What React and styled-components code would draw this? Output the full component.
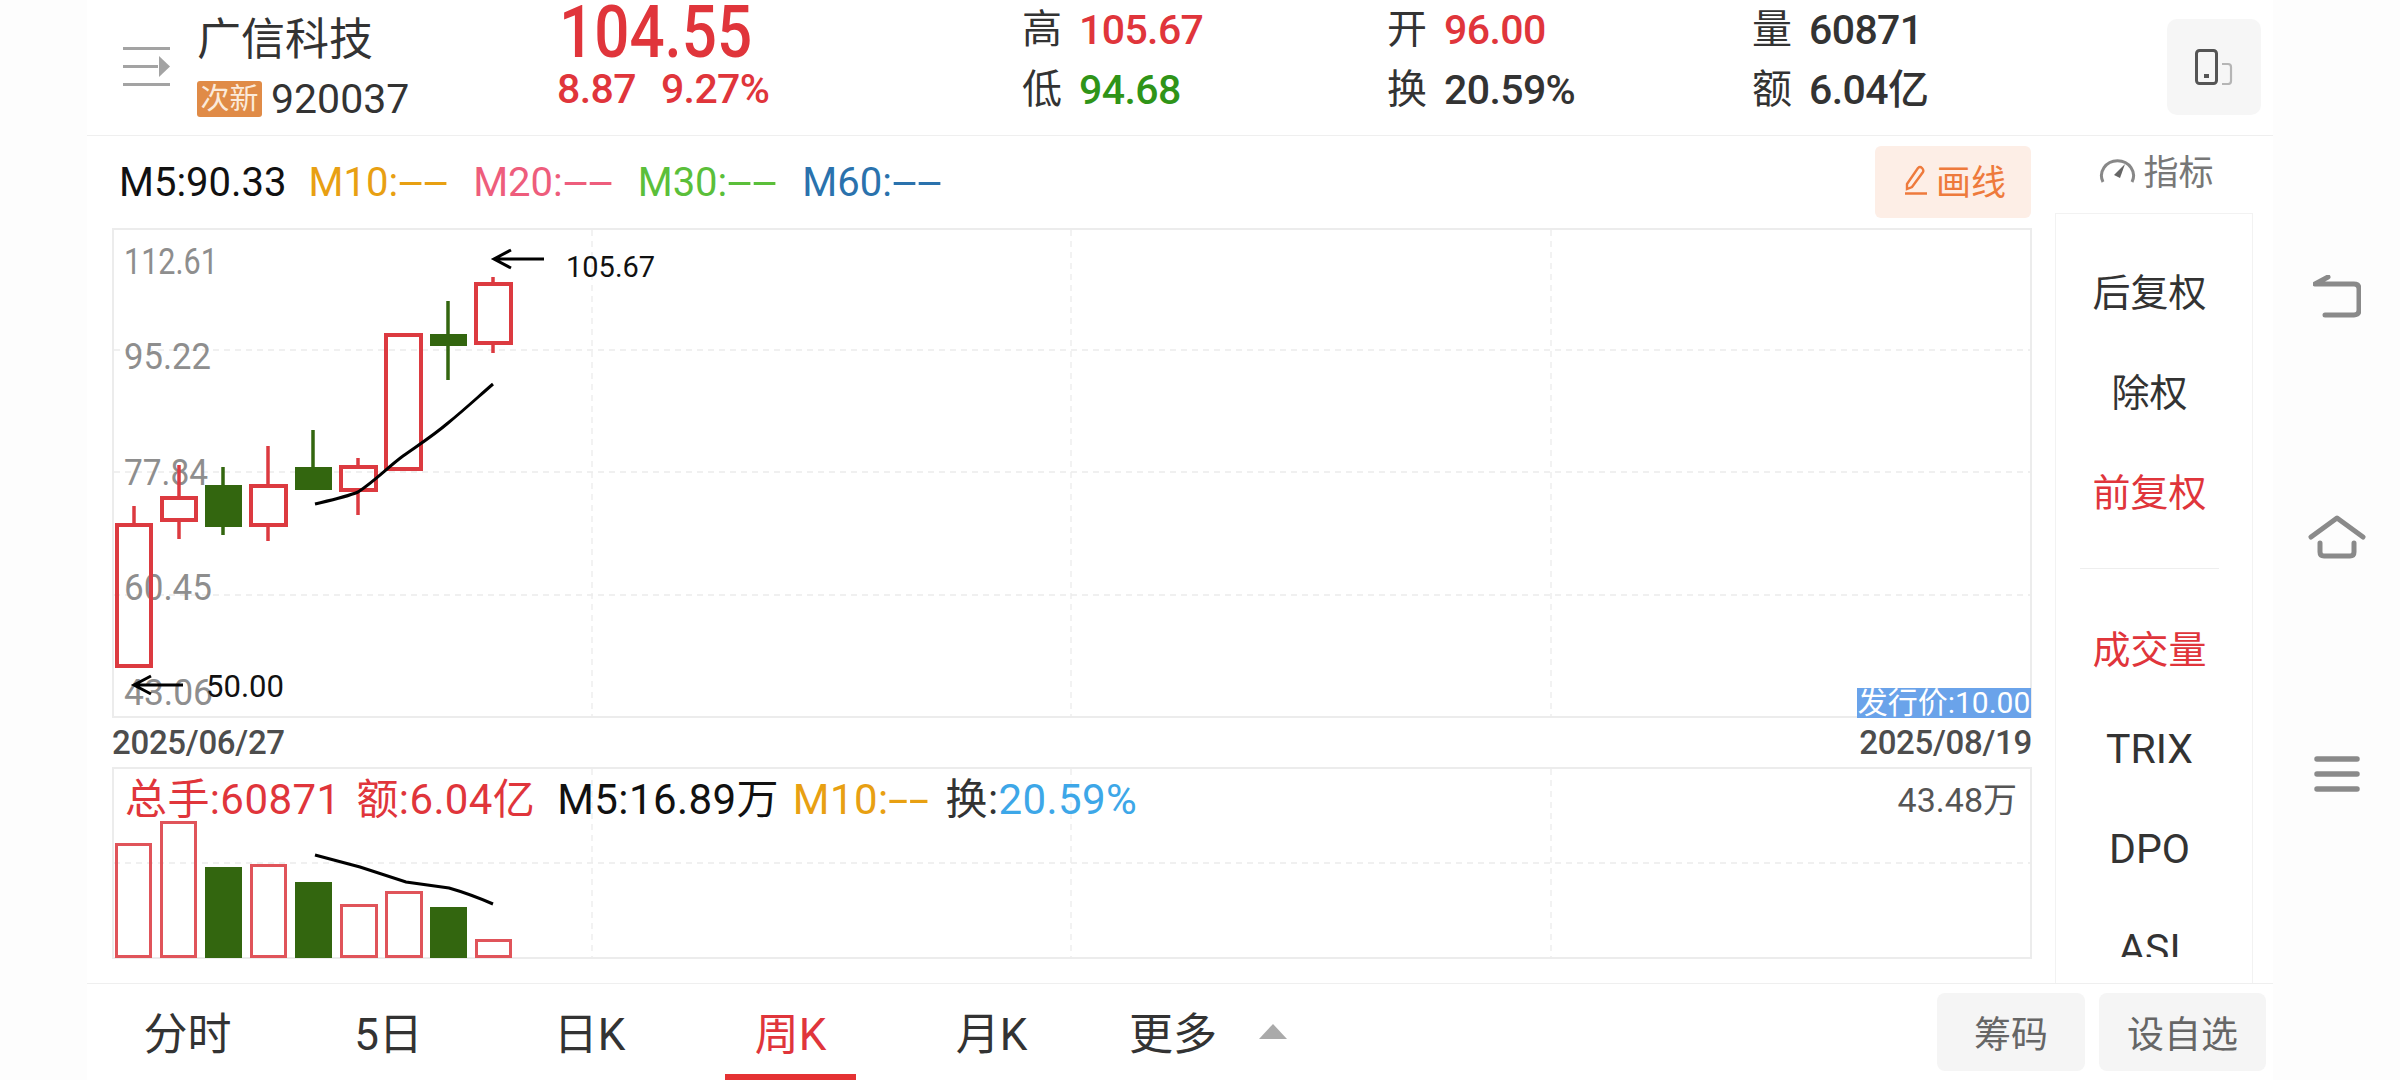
import styled, { createGlobalStyle } from 'styled-components'

const RED = '#e0353b'
const GREEN = '#33660f'

const GlobalStyle = createGlobalStyle`
    html, body {
        margin: 0;
        padding: 0;
        background: #fdfdfd;
    }
    * {
        box-sizing: border-box;
    }
`

const Page = styled.div`
    width: 2400px;
    height: 1080px;
    display: flex;
    overflow: hidden;
    padding-left: 87px;
    font-family: Roboto, "Noto Sans CJK SC", sans-serif;
    color: #333;
`

const Main = styled.div`
    width: 2186px;
    display: flex;
    flex-direction: column;
    background: #fff;
`

const Header = styled.header`
    height: 136px;
    flex: none;
    display: flex;
    padding-left: 36px;
    border-bottom: 1px solid #efefef;
`

const MenuIcon = styled.svg`
    width: 47px;
    height: 40px;
    margin-top: 47px;
    margin-right: 27px;
    flex: none;
`

const NameBlock = styled.div`
    width: 360px;
    flex: none;
`

const Name = styled.div`
    font-size: 44px;
    line-height: 44px;
    margin-top: 18px;
`

const CodeRow = styled.div`
    display: flex;
    align-items: center;
    margin-top: 19px;
`

const Badge = styled.span`
    width: 65px;
    height: 36px;
    background: #e08b47;
    color: #fbeadb;
    border-radius: 3px;
    font-size: 29px;
    line-height: 36px;
    text-align: center;
`

const Code = styled.span`
    font-size: 41px;
    line-height: 36px;
    margin-left: 9px;
`

const PriceBlock = styled.div`
    width: 468px;
    flex: none;
    color: ${RED};
`

const Price = styled.div`
    font-weight: 500;
    font-size: 72px;
    line-height: 66px;
    margin-left: 2px;
    transform: scaleX(0.86);
    transform-origin: left center;
`

const Change = styled.div`
    display: flex;
    gap: 25px;
    font-weight: 500;
    font-size: 41px;
    line-height: 44px;
    margin-top: 1px;
    letter-spacing: -0.6px;
`

const Stats = styled.div`
    width: 1095px;
    flex: none;
    display: grid;
    grid-template-columns: 365px 365px 1fr;
    grid-auto-rows: 60px;
    margin-left: -3px;
`

const Stat = styled.div`
    display: flex;
    align-items: center;
    gap: 17px;
    font-size: 40px;
    line-height: 60px;
`

const StatValue = styled.span`
    font-size: 41px;
    font-weight: 500;
    letter-spacing: -0.6px;
    color: ${p => p.$color || '#333'};
`

const LayoutButton = styled.button`
    width: 94px;
    height: 96px;
    margin: 19px 0 0 50px;
    border: 0;
    border-radius: 10px;
    background: #f6f6f6;
    display: flex;
    align-items: center;
    justify-content: center;
    padding: 0;
`

const Body = styled.div`
    height: 848px;
    flex: none;
    display: flex;
    padding-left: 25px;
    border-bottom: 1px solid #efefef;
`

const ChartColumn = styled.div`
    width: 1920px;
    flex: none;
`

const LegendBar = styled.div`
    height: 92px;
    display: flex;
    align-items: center;
    gap: 25px;
    padding: 0 1px 0 7px;
`

const Legend = styled.span`
    font-size: 40px;
    color: ${p => p.$color};
    margin-right: ${p => p.$pull || 0}px;
`

// the dashes in the picture are long, a hyphen stretched sideways comes closest
const Dashes = styled.span`
    display: inline-block;
    width: ${p => p.$width || 50}px;
    transform: scaleX(${p => (p.$width || 50) / 22});
    transform-origin: left center;
`

const DrawButton = styled.button`
    width: 156px;
    height: 72px;
    margin-left: auto;
    border: 0;
    border-radius: 6px;
    background: #fdeee6;
    color: #ee7a3c;
    font-family: inherit;
    font-size: 35px;
    display: flex;
    align-items: center;
    justify-content: center;
    gap: 8px;
    padding: 0 0 5px 4px;
`

const Frame = styled.div`
    position: relative;
    height: ${p => p.$height}px;
    border: 2px solid #ececec;
`

const Plot = styled.svg`
    position: absolute;
    top: 0;
    left: 0;
    width: 100%;
    height: 100%;
    overflow: visible;
`

const IssueTag = styled.span`
    position: absolute;
    right: -1px;
    bottom: -2px;
    width: 174px;
    height: 30px;
    background: #6aa3ea;
    color: #fff;
    font-size: 30px;
    line-height: 30px;
    white-space: nowrap;
    text-align: center;
`

const DateRow = styled.div`
    height: 49px;
    display: flex;
    justify-content: space-between;
    align-items: center;
    font-size: 33px;
    font-weight: 500;
    letter-spacing: -0.3px;
    color: #4d4d4d;
`

const VolumeLegend = styled.div`
    position: absolute;
    top: 11px;
    left: 11px;
    right: 13px;
    display: flex;
    align-items: center;
    font-size: 42px;
    line-height: 40px;
    white-space: nowrap;
    letter-spacing: 0.4px;
`

const VolumeItem = styled.span`
    color: ${p => p.$color};
    margin-right: ${p => p.$gap}px;
`

const VolumeMax = styled.span`
    margin-left: auto;
    font-size: 34px;
    letter-spacing: 0;
    color: #555;
`

const RailColumn = styled.div`
    width: 198px;
    margin-left: 23px;
    flex: none;
    display: flex;
    flex-direction: column;
`

const RailHead = styled.div`
    height: 77px;
    flex: none;
    display: flex;
    align-items: center;
    justify-content: center;
    gap: 7px;
    padding: 0 0 10px 5px;
    color: #777;
    font-size: 35px;
`

const Rail = styled.div`
    flex: 1;
    border: 1px solid #f2f2f2;
    border-bottom: 0;
`

const RailClip = styled.div`
    height: 743px;
    padding-top: 25px;
    overflow: hidden;
`

const RailItem = styled.div`
    height: 100px;
    display: flex;
    align-items: center;
    justify-content: center;
    padding: ${p => (p.$latin ? '6px' : '0')} 9px 0 0;
    font-size: ${p => (p.$latin ? 41 : 38)}px;
    color: ${p => (p.$active ? RED : '#333')};
`

const RailDivider = styled.div`
    height: 1px;
    margin: 29px 33px 27px 24px;
    background: #eee;
`

const TabBar = styled.nav`
    flex: 1;
    display: flex;
    align-items: stretch;
`

const Tab = styled.div`
    position: relative;
    width: ${p => p.$width || 201}px;
    display: flex;
    align-items: center;
    justify-content: center;
    gap: 42px;
    padding-bottom: 2px;
    font-size: 44px;
    color: ${p => (p.$active ? RED : '#333')};
    ${p => p.$active && `
        &::after {
            content: '';
            position: absolute;
            left: 35px;
            bottom: 0;
            width: 131px;
            height: 6px;
            background: #e53233;
        }
    `}
`

const MoreArrow = styled.i`
    width: 0;
    height: 0;
    border-left: 14px solid transparent;
    border-right: 14px solid transparent;
    border-bottom: 15px solid #aaa;
`

const TabActions = styled.div`
    margin-left: auto;
    padding: 9px 7px 9px 0;
    display: flex;
    gap: 14px;
`

const ActionButton = styled.button`
    width: ${p => p.$width}px;
    border: 0;
    border-radius: 8px;
    background: #f5f5f5;
    color: #666;
    font-family: inherit;
    font-size: 37px;
    padding: 0;
`

const SystemNav = styled.div`
    flex: 1;
    display: flex;
    flex-direction: column;
    align-items: center;
    padding: 275px 0 0 0;
    gap: 197px;
`

const candles = [
    { x: 134, left: 115, right: 153, top: 523, bottom: 668, hi: 506, lo: 668, up: true },
    { x: 179, left: 160, right: 198, top: 496, bottom: 522, hi: 465, lo: 539, up: true },
    { x: 223, left: 205, right: 242, top: 485, bottom: 527, hi: 467, lo: 535 },
    { x: 268, left: 249, right: 288, top: 484, bottom: 527, hi: 446, lo: 541, up: true },
    { x: 313, left: 295, right: 332, top: 467, bottom: 490, hi: 430, lo: 490 },
    { x: 358, left: 339, right: 378, top: 465, bottom: 492, hi: 458, lo: 515, up: true },
    { x: 404, left: 384, right: 423, top: 333, bottom: 471, hi: 333, lo: 471, up: true },
    { x: 448, left: 430, right: 467, top: 334, bottom: 346, hi: 301, lo: 380 },
    { x: 493, left: 474, right: 513, top: 282, bottom: 345, hi: 277, lo: 353, up: true },
]

const volumes = [
    { left: 115, right: 152, top: 843, up: true },
    { left: 160, right: 197, top: 821, up: true },
    { left: 205, right: 242, top: 867 },
    { left: 250, right: 287, top: 864, up: true },
    { left: 295, right: 332, top: 882 },
    { left: 340, right: 378, top: 904, up: true },
    { left: 385, right: 423, top: 891, up: true },
    { left: 430, right: 467, top: 907 },
    { left: 475, right: 512, top: 939, up: true },
]

const axisLabels = [
    { text: '112.61', y: 274, width: 94 },
    { text: '95.22', y: 369, width: 87 },
    { text: '77.84', y: 485, width: 84 },
    { text: '60.45', y: 600, width: 88 },
    { text: '43.06', y: 705, width: 89 },
]

const gridX = [592, 1071, 1551]

function GridLine(props) {
    return <line stroke="#ececec" strokeWidth="1.3" strokeDasharray="6 5" {...props} />
}

function PriceChart() {
    return (
        <Plot viewBox="114 230 1916 486">
            {[350, 472, 595].map(y => (
                <GridLine key={y} x1="114" x2="2030" y1={y} y2={y} />
            ))}
            {gridX.map(x => (
                <GridLine key={x} x1={x} x2={x} y1="230" y2="716" />
            ))}
            {axisLabels.map(l => (
                <text key={l.text} x="124" y={l.y} fontFamily="Roboto" fontSize="36" fill="#8e8e8e" textLength={l.width} lengthAdjust="spacingAndGlyphs">{l.text}</text>
            ))}
            {candles.map(c => {
                const color = c.up ? '#dc3a40' : GREEN
                return (
                    <g key={c.x}>
                        <line x1={c.x} x2={c.x} y1={c.hi} y2={c.top} stroke={color} strokeWidth="3.5" />
                        <line x1={c.x} x2={c.x} y1={c.bottom} y2={c.lo} stroke={color} strokeWidth="3.5" />
                        {c.up ? (
                            <rect x={c.left + 2} y={c.top + 2} width={c.right - c.left - 4} height={c.bottom - c.top - 4} fill="none" stroke={color} strokeWidth="4" />
                        ) : (
                            <rect x={c.left} y={c.top} width={c.right - c.left} height={c.bottom - c.top} fill={color} />
                        )}
                    </g>
                )
            })}
            <path d="M315 504 C332 500 346 497 358 492 C375 481 388 467 403 456 C420 444 434 435 448 423 C464 410 478 397 493 384" fill="none" stroke="#000" strokeWidth="3" />
            <path d="M544 259 H494 M511 250 L494 259 L511 268" fill="none" stroke="#000" strokeWidth="3" />
            <text x="566" y="277" fontFamily="Roboto" fontSize="29" fill="#111">105.67</text>
            <path d="M183 685 H134 M151 676 L134 685 L151 694" fill="none" stroke="#000" strokeWidth="3" />
            <text x="206" y="697" fontFamily="Roboto" fontSize="32" fill="#111" textLength="78" lengthAdjust="spacingAndGlyphs">50.00</text>
        </Plot>
    )
}

function VolumeChart() {
    return (
        <Plot viewBox="114 769 1916 188">
            <GridLine x1="114" x2="2030" y1="863" y2="863" />
            {gridX.map(x => (
                <GridLine key={x} x1={x} x2={x} y1="769" y2="957" />
            ))}
            {volumes.map(v => (
                v.up ? (
                    <rect key={v.left} x={v.left + 1.5} y={v.top + 1.5} width={v.right - v.left - 3} height={958 - v.top - 3} fill="none" stroke="#e0545a" strokeWidth="3" />
                ) : (
                    <rect key={v.left} x={v.left} y={v.top} width={v.right - v.left} height={958 - v.top} fill={GREEN} />
                )
            ))}
            <path d="M315 855 L360 867 L406 882 L449 888 Q470 894 493 904" fill="none" stroke="#000" strokeWidth="3" />
        </Plot>
    )
}

function App() {
    return (
        <Page>
            <GlobalStyle />
            <Main>
                <Header>
                    <MenuIcon viewBox="0 0 47 40">
                        <path d="M0 1.5H47 M0 19.5H35 M0 37.5H47" stroke="#a3a3a3" strokeWidth="3" />
                        <path d="M36 9 L47 19.5 L36 30Z" fill="#a3a3a3" />
                    </MenuIcon>
                    <NameBlock>
                        <Name>广信科技</Name>
                        <CodeRow>
                            <Badge>次新</Badge>
                            <Code>920037</Code>
                        </CodeRow>
                    </NameBlock>
                    <PriceBlock>
                        <Price>104.55</Price>
                        <Change>
                            <span>8.87</span>
                            <span>9.27%</span>
                        </Change>
                    </PriceBlock>
                    <Stats>
                        <Stat>高<StatValue $color={RED}>105.67</StatValue></Stat>
                        <Stat>开<StatValue $color={RED}>96.00</StatValue></Stat>
                        <Stat>量<StatValue>60871</StatValue></Stat>
                        <Stat>低<StatValue $color="#2f9418">94.68</StatValue></Stat>
                        <Stat>换<StatValue>20.59%</StatValue></Stat>
                        <Stat>额<StatValue>6.04亿</StatValue></Stat>
                    </Stats>
                    <LayoutButton>
                        <svg width="38" height="36" viewBox="0 0 38 36">
                            <rect x="1.5" y="1.5" width="20" height="33" rx="3" fill="none" stroke="#555" strokeWidth="3" />
                            <rect x="9" y="25" width="5" height="4" fill="#555" />
                            <path d="M27 15 H33 Q36 15 36 18 V32 Q36 35 33 35 H27" fill="none" stroke="#b5b5b5" strokeWidth="2.2" />
                        </svg>
                    </LayoutButton>
                </Header>
                <Body>
                    <ChartColumn>
                        <LegendBar>
                            <Legend $color="#111" $pull={-3}>M5:90.33</Legend>
                            <Legend $color="#e8a012">M10:<Dashes>--</Dashes></Legend>
                            <Legend $color="#ee5d7c">M20:<Dashes>--</Dashes></Legend>
                            <Legend $color="#5bbf3a">M30:<Dashes>--</Dashes></Legend>
                            <Legend $color="#2a72ad">M60:<Dashes>--</Dashes></Legend>
                            <DrawButton>
                                <svg width="24" height="30" viewBox="0 0 24 30">
                                    <path d="M3 19 L14 3 Q16 1 18 3 Q20 5 19 7 L8 22 L3 24Z M1 28.5 H23" fill="none" stroke="#ee7a3c" strokeWidth="2.4" />
                                </svg>
                                画线
                            </DrawButton>
                        </LegendBar>
                        <Frame $height={490}>
                            <PriceChart />
                            <IssueTag>发行价:10.00</IssueTag>
                        </Frame>
                        <DateRow>
                            <span>2025/06/27</span>
                            <span>2025/08/19</span>
                        </DateRow>
                        <Frame $height={192}>
                            <VolumeChart />
                            <VolumeLegend>
                                <VolumeItem $color={RED} $gap={16}>总手:60871</VolumeItem>
                                <VolumeItem $color={RED} $gap={22}>额:6.04亿</VolumeItem>
                                <VolumeItem $color="#111" $gap={14}>M5:16.89万</VolumeItem>
                                <VolumeItem $color="#e8a012" $gap={19}>M10:<Dashes $width={38}>--</Dashes></VolumeItem>
                                <VolumeItem $color="#333" $gap={0}>换:</VolumeItem>
                                <VolumeItem $color="#3da7e8" $gap={0}>20.59%</VolumeItem>
                                <VolumeMax>43.48万</VolumeMax>
                            </VolumeLegend>
                        </Frame>
                    </ChartColumn>
                    <RailColumn>
                        <RailHead>
                            <svg width="37" height="28" viewBox="0 0 37 28">
                                <path d="M4 26 A16 15 0 1 1 33 26" fill="none" stroke="#888" strokeWidth="3" />
                                <path d="M15 19 L26 8 L21 22Z" fill="#666" />
                            </svg>
                            指标
                        </RailHead>
                        <Rail>
                            <RailClip>
                                <RailItem>后复权</RailItem>
                                <RailItem>除权</RailItem>
                                <RailItem $active>前复权</RailItem>
                                <RailDivider />
                                <RailItem $active>成交量</RailItem>
                                <RailItem $latin>TRIX</RailItem>
                                <RailItem $latin>DPO</RailItem>
                                <RailItem $latin>ASI</RailItem>
                            </RailClip>
                        </Rail>
                    </RailColumn>
                </Body>
                <TabBar>
                    <Tab>分时</Tab>
                    <Tab>5日</Tab>
                    <Tab>日K</Tab>
                    <Tab $active>周K</Tab>
                    <Tab>月K</Tab>
                    <Tab $width={232}>更多<MoreArrow /></Tab>
                    <TabActions>
                        <ActionButton $width={148}>筹码</ActionButton>
                        <ActionButton $width={167}>设自选</ActionButton>
                    </TabActions>
                </TabBar>
            </Main>
            <SystemNav>
                <svg width="48" height="43" viewBox="0 0 48 43">
                    <path d="M2 9 H41 Q46 9 46 14 V35 Q46 40 41 40 H12 M2 9 L15 2" fill="none" stroke="#8a8a8a" strokeWidth="5" strokeLinecap="round" strokeLinejoin="round" />
                </svg>
                <svg width="58" height="44" viewBox="0 0 58 44">
                    <path d="M3 22 L29 3 L55 22 M12 28 V37 Q12 41 16 41 H42 Q46 41 46 37 V28" fill="none" stroke="#8a8a8a" strokeWidth="5" strokeLinecap="round" strokeLinejoin="round" />
                </svg>
                <svg width="46" height="36" viewBox="0 0 46 36">
                    <path d="M3 3 H43 M3 18 H43 M3 33 H43" fill="none" stroke="#8a8a8a" strokeWidth="5.5" strokeLinecap="round" />
                </svg>
            </SystemNav>
        </Page>
    )
}

export default App
